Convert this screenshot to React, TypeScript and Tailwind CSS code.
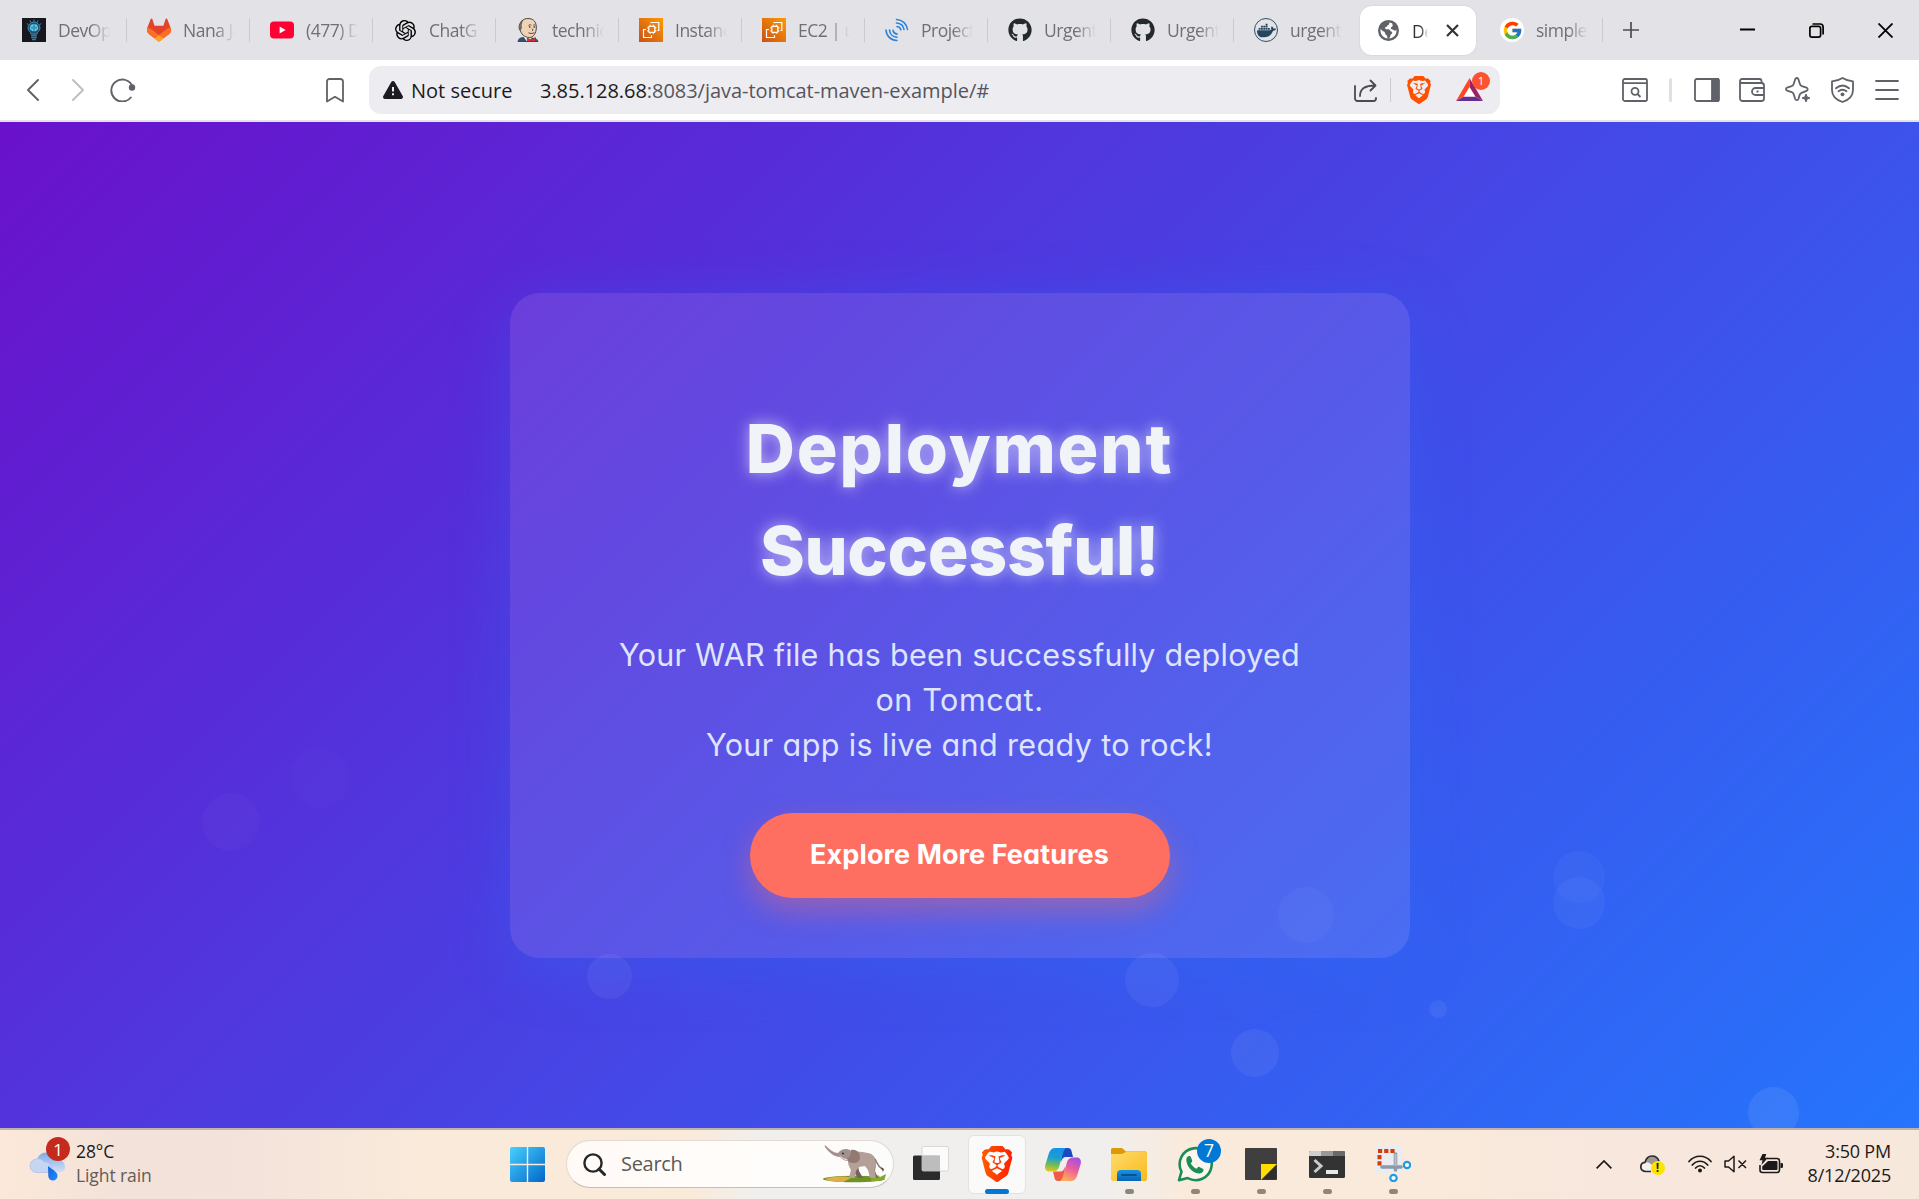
import type { ReactNode } from 'react';
import { FaGithub } from 'react-icons/fa';
import { FcGoogle } from 'react-icons/fc';
import { SiBrave, SiDocker, SiOpenai } from 'react-icons/si';

/* ---------- favicons ---------- */

const DevOpsIcon = () => (
  <svg className="size-6" viewBox="0 0 24 24">
    <rect width="24" height="24" fill="#17181f" />
    <g fill="none" stroke="#3f8fb8" strokeWidth="1">
      <path d="M12 1.5v2M8 2.5l.8 1.6M16 2.500l-.8 1.600M4.800 5.500l1.600 1.200M19.200 5.500l-1.600 1.200" />
      <path d="M9 16c0-2-3-3-3-6a6 6 0 0 1 12 0c0 3-3 4-3 6z" fill="#1d4f6b" />
      <path d="M9.200 17.500h5.600M9.200 19.500h5.600M10 21.500h4" stroke="#2f7ea8" strokeWidth="1.300" />
    </g>
    <path d="M12 6.500c-2.200-.6-4 .8-3.800 2.600-.9 1.400 0 3.200 1.500 3.400.6 1 1.700 1 2.300.5.600.5 1.700.5 2.300-.5 1.500-.2 2.400-2 1.500-3.400.2-1.800-1.600-3.200-3.800-2.600z" fill="#5fd0f5" />
    <path d="M12 6.800v6M10 8.500v2.500M14 8.500v2.500" stroke="#17435c" strokeWidth=".8" />
  </svg>
);

const GitlabIcon = () => (
  <svg className="size-6" viewBox="0 0 25 24">
    <path fill="#E24329" d="M24.507 9.500l-.034-.09L21.082.562a.896.896 0 0 0-1.694.091l-2.290 7.010H7.825L5.535.653a.898.898 0 0 0-1.694-.09L.451 9.411.416 9.500a6.297 6.297 0 0 0 2.090 7.278l.012.010.030.022 5.160 3.867 2.560 1.935 1.554 1.176a1.051 1.051 0 0 0 1.268 0l1.555-1.176 2.560-1.935 5.197-3.890.014-.010A6.297 6.297 0 0 0 24.507 9.500z" />
    <path fill="#FC6D26" d="M24.507 9.500l-.034-.09a11.440 11.440 0 0 0-4.560 2.051l-7.447 5.632 4.742 3.584 5.197-3.890.014-.010A6.297 6.297 0 0 0 24.507 9.500z" />
    <path fill="#FCA326" d="M7.707 20.677l2.560 1.935 1.555 1.176a1.051 1.051 0 0 0 1.268 0l1.555-1.176 2.560-1.935-4.743-3.584-4.755 3.584z" />
    <path fill="#FC6D26" d="M5.010 11.461a11.430 11.430 0 0 0-4.560-2.050L.416 9.500a6.297 6.297 0 0 0 2.090 7.278l.012.010.030.022 5.160 3.867 4.745-3.584-7.444-5.632z" />
  </svg>
);

const YoutubeIcon = () => (
  <svg className="size-6" viewBox="0 0 24 24">
    <rect y="3.500" width="24" height="17" rx="4" fill="#ff0033" />
    <path d="M9.600 8.600v6.800l6-3.400z" fill="#fff" />
  </svg>
);

const JenkinsIcon = () => (
  <svg className="size-6" viewBox="0 0 24 24">
    <path d="M1.500 24c.3-3 2.300-4.500 5.500-5l8 .5c4 .3 7 1.500 7.500 4.500z" fill="#33506b" />
    <path d="M7.500 18.500l3 4.500 5-1-.5-4z" fill="#fff" />
    <path d="M4 11c-1-7 3-10.500 8-10.500 6 0 8.500 4 8.300 9.500-.1 5-2.800 9.500-6.800 9.500C8.500 19.500 4.700 16 4 11z" fill="#efd3b4" stroke="#3a3633" strokeWidth=".9" />
    <path d="M3.500 12c-1.500-3 0-7 2.500-9.500 1 1-1.300 3-.6 6.500.2 1.500-.3 2.500-1.900 3z" fill="#7b706a" stroke="#3a3633" strokeWidth=".5" />
    <path d="M12.500 7.500c1-1 2.200-.8 2.800-.2M17.300 7.200c.8-.6 1.600-.4 2 .2M15.800 10.500c1.200.8 1.400 2 .2 2.400M12.500 14.800c2 1 4 .8 5.800-.1" stroke="#3a3633" strokeWidth=".9" fill="none" />
    <circle cx="13.700" cy="9" r=".8" fill="#222" />
    <circle cx="18.200" cy="9" r=".8" fill="#222" />
    <path d="M11 20l4 1.500 4.500-2v4.500l-4.500-1.200L11.500 24z" fill="#d33833" stroke="#7a1c18" strokeWidth=".5" />
  </svg>
);

const Ec2Icon = () => (
  <svg className="size-6" viewBox="0 0 24 24">
    <defs>
      <linearGradient id="ec2" x1="0" y1="1" x2="1" y2="0">
        <stop offset="0" stopColor="#c8511b" />
        <stop offset="1" stopColor="#ff9900" />
      </linearGradient>
    </defs>
    <rect width="24" height="24" fill="url(#ec2)" />
    <g fill="none" stroke="#fff" strokeWidth="1.200">
      <rect x="9.800" y="8.300" width="6" height="6" rx=".6" />
      <path d="M11.200 8.300V6.800M14.400 8.300V6.800M11.200 15.800v-1.500M14.400 15.800v-1.500M9.800 9.800H8.300M9.800 12.900H8.300M17.300 9.800h-1.500M17.300 12.900h-1.500" />
      <path d="M12.200 5.300V4.500h7.600v8h-1.200M7 11.500H4.500v8h8V17.300" />
    </g>
  </svg>
);

const SonarIcon = () => (
  <svg className="size-6" viewBox="0 0 24 24" fill="none" stroke="#2b82d9" strokeWidth="1.600" strokeLinecap="round">
    <path d="M11.500 1.500c6 .3 10.500 4.500 11 10M11.500 5c4.500.3 7 3 7.500 6.500M12 8.500c2 .2 3.500 1.400 3.800 3.300" />
    <path d="M1 12c.3 5.800 4.800 10.300 11 10.500M4.500 12c.3 4 3.300 7 7.500 7.300M8 12.300c.3 2.100 1.800 3.500 4 3.800" />
  </svg>
);

const DockerIcon = () => (
  <span className="flex size-6 items-center justify-center rounded-full border-[1.5px] border-[#2c5066]">
    <SiDocker className="size-[19px] text-[#24475e]" />
  </span>
);

const GlobeIcon = () => (
  <svg className="size-[21px]" viewBox="0 0 21 21">
    <circle cx="10.500" cy="10.500" r="9.300" fill="#fff" stroke="#5f6368" strokeWidth="2.400" />
    <path d="M2 8.500c1-4 4.500-6.800 8.500-6.800l.8 1.500c0 1.200-.6 2-1.800 2-.2 1.500-1 1.800-2.300 1.800-.3 2 .5 2.300 2.300 2.300 1.700 0 2.700.4 3 2 1.300 0 2 .7 1.700 2-.5 1-1.500 1-1.800 2.300-.2 1.500-.8 2.400-1.800 3.300-1 0-1.300-1-1.400-2.500-.1-1.700-1.700-1.400-2-3-.2-1-.8-1.800-2.200-2.200z" fill="#5f6368" />
    <path d="M14.500 2.800c2.500 1.500 4.300 4.200 4.300 7l-1.800 1c-1 0-1.200-1.200-2.500-1.300-1.500-.2-2-1.200-1.300-2.300.8-1 1.900-.7 1.500-2-.3-1-.5-1.700-.2-2.400z" fill="#5f6368" />
  </svg>
);

const GoogleIcon = () => (
  <span className="flex size-6 items-center justify-center rounded-full bg-white">
    <FcGoogle className="size-[21px]" />
  </span>
);

/* ---------- tab strip ---------- */

const tabs: { icon: ReactNode; title: string; first?: boolean; last?: boolean }[] = [
  { icon: <DevOpsIcon />, title: 'DevOps', first: true },
  { icon: <GitlabIcon />, title: 'Nana Ja' },
  { icon: <YoutubeIcon />, title: '(477) De' },
  { icon: <SiOpenai className="size-[21px] text-black" />, title: 'ChatG' },
  { icon: <JenkinsIcon />, title: 'technic' },
  { icon: <Ec2Icon />, title: 'Instanc' },
  { icon: <Ec2Icon />, title: 'EC2 | us' },
  { icon: <SonarIcon />, title: 'Project' },
  { icon: <FaGithub className="size-6 text-[#24292e]" />, title: 'Urgent' },
  { icon: <FaGithub className="size-6 text-[#24292e]" />, title: 'Urgent' },
  { icon: <DockerIcon />, title: 'urgent-', last: true },
];

const TabTitle = ({ children }: { children: string }) => (
  <span className="ml-3 w-[53px] shrink-0 overflow-hidden text-[17.500px] leading-6 tracking-[-0.500px] whitespace-nowrap text-[#707074] [mask-image:linear-gradient(to_right,#000_60%,transparent_98%)]">
    {children}
  </span>
);

const TabStrip = () => (
  <div className="flex h-[60px] shrink-0 items-center bg-[#e3e2e7] pl-1">
    {tabs.map((t, i) => (
      <div
        key={i}
        className={`flex h-6 w-[123px] shrink-0 items-center ${t.first ? 'pl-[18px]' : 'pl-5'} ${t.last ? '' : 'border-r-[1.5px] border-[#cbcacf]'}`}
      >
        <span className="flex size-6 shrink-0 items-center justify-center">{t.icon}</span>
        <TabTitle>{t.title}</TabTitle>
      </div>
    ))}
    <div className="mt-[1px] ml-[3px] flex h-[49px] w-[116px] shrink-0 items-center rounded-xl bg-white pl-[18px] shadow-[0_0_2px_rgba(0,0,0,0.12)]">
      <GlobeIcon />
      <span className="ml-[13px] w-4 overflow-hidden text-[17.500px] leading-6 tracking-[-0.350px] whitespace-nowrap text-[#303036] [mask-image:linear-gradient(to_right,#000_55%,transparent_100%)]">
        De
      </span>
      <svg className="ml-[18px] size-[13px]" viewBox="0 0 13 13" stroke="#333338" strokeWidth="2.200">
        <path d="M1 1l11 11M12 1L1 12" />
      </svg>
    </div>
    <div className="ml-1 flex h-6 w-[123px] shrink-0 items-center border-r-[1.5px] border-[#cbcacf] pl-5">
      <GoogleIcon />
      <TabTitle>simplew</TabTitle>
    </div>
    <svg className="ml-5 size-4" viewBox="0 0 16 16" stroke="#4c4c52" strokeWidth="1.700">
      <path d="M8 0v16M0 8h16" />
    </svg>
    <svg className="ml-[101px] size-[15px]" viewBox="0 0 15 15" stroke="#000" strokeWidth="2">
      <path d="M0 6.500h15" />
    </svg>
    <svg className="ml-[54px] size-[15px]" viewBox="0 0 15 15" fill="none" stroke="#000" strokeWidth="1.700">
      <rect x=".9" y="3.400" width="10.700" height="10.700" rx="2" />
      <path d="M3.500 1h7.600a3 3 0 0 1 3 3v7.500" />
    </svg>
    <svg className="ml-[54px] size-[15px]" viewBox="0 0 15 15" stroke="#000" strokeWidth="1.800">
      <path d="M.5.500l14 14M14.500.500l-14 14" />
    </svg>
  </div>
);

/* ---------- toolbar ---------- */

const Toolbar = () => (
  <div className="flex h-[62px] shrink-0 items-center border-b-2 border-[#e3e2e8] bg-white">
    <svg className="ml-[27px] h-[22px] w-3" viewBox="0 0 12 22" fill="none" stroke="#5f6268" strokeWidth="1.900" strokeLinecap="round" strokeLinejoin="round">
      <path d="M11 1L1 11l10 10" />
    </svg>
    <svg className="ml-[33px] h-[22px] w-3" viewBox="0 0 12 22" fill="none" stroke="#bfbfc3" strokeWidth="1.900" strokeLinecap="round" strokeLinejoin="round">
      <path d="M1 1l10 10L1 21" />
    </svg>
    <svg className="ml-[26px] h-6 w-[26px]" viewBox="0 0 26 24" fill="none" stroke="#5f6268" strokeWidth="1.900" strokeLinecap="round">
      <path d="M20.800 19.500A11 11 0 1 1 21.500 6.500" />
      <circle cx="22" cy="9.500" r="3.200" fill="#5f6268" stroke="none" />
    </svg>
    <svg className="ml-[190px] h-[25px] w-[18px]" viewBox="0 0 18 25" fill="none" stroke="#5f6268" strokeWidth="1.800" strokeLinejoin="round">
      <path d="M1 3.500A2.500 2.500 0 0 1 3.500 1h11A2.500 2.500 0 0 1 17 3.500V23.500L9 18.800l-8 4.700z" />
    </svg>
    <div className="ml-[25px] flex h-12 w-[1131px] items-center rounded-xl bg-[#edecf1] text-[20px]">
      <svg className="ml-[14px] h-[18px] w-5" viewBox="0 0 20 18">
        <path d="M8.300 1a2 2 0 0 1 3.400 0l8 14a2 2 0 0 1-1.700 3H2a2 2 0 0 1-1.700-3z" fill="#1b1b21" />
        <path d="M10 6v4.500M10 12.300v2" stroke="#edecf1" strokeWidth="2" />
      </svg>
      <span className="mt-px ml-[8px] w-[129px] whitespace-nowrap text-[#1b1b21]">Not secure</span>
      <span className="mt-px tracking-[-0.040px] whitespace-nowrap text-[#55555c]">
        <span className="text-[#1b1b21]">3.85.128.68</span>:8083/java-tomcat-maven-example/#
      </span>
      <svg className="ml-auto h-[23px] w-[23px]" viewBox="0 0 23 23" fill="none" stroke="#4a4b52" strokeWidth="1.800" strokeLinecap="round" strokeLinejoin="round">
        <path d="M1 7v12.500A2.500 2.500 0 0 0 3.500 22h16a2.500 2.500 0 0 0 2.500-2.500V19" />
        <path d="M6 17C6 10 11 6.500 21 6.500M16.500 1.500l5 5-5 5" />
      </svg>
      <div className="ml-[13px] h-6 w-[1.500px] bg-[#cbcad0]" />
      <span className="ml-[14px] flex size-7 items-center justify-center">
        <SiBrave className="size-7 text-[#ff5000]" />
      </span>
      <div className="relative mr-[17px] ml-[23px] h-6 w-[27px]">
        <svg className="h-6 w-[27px]" viewBox="0 0 27 24">
          <path d="M13.500 0L0 23h27z" fill="#fff" />
          <path d="M13.500 0L0 23l7.500-4.300 6-9.700z" fill="#ff4724" />
          <path d="M13.500 0L27 23l-7.500-4.300-6-9.700z" fill="#9e1f63" />
          <path d="M0 23h27l-7.500-4.300h-12z" fill="#662d91" />
        </svg>
        <span className="absolute -top-[6px] left-[16px] flex size-[18px] items-center justify-center rounded-full bg-[#fc522d] text-[11.500px] leading-none text-white">1</span>
      </div>
    </div>
    <svg className="ml-[122px] h-6 w-[26px]" viewBox="0 0 26 24" fill="none" stroke="#5f6268" strokeWidth="1.800">
      <rect x="1" y="1" width="24" height="22" rx="1.800" />
      <path d="M1 5.200h24M15.500 16l3 3" />
      <circle cx="13" cy="13.300" r="3.500" />
    </svg>
    <div className="ml-[21px] h-6 w-[3px] rounded-full bg-[#e0dfe4]" />
    <svg className="ml-[22px] h-6 w-[26px]" viewBox="0 0 26 24" fill="none" stroke="#5f6268" strokeWidth="1.800">
      <rect x="1" y="1" width="24" height="22" rx="1.800" />
      <path d="M18 1h6v22h-6z" fill="#5f6268" />
    </svg>
    <svg className="ml-[19px] h-6 w-[26px]" viewBox="0 0 26 24" fill="none" stroke="#5f6268" strokeWidth="1.800" strokeLinejoin="round">
      <path d="M1 4v16.500A2.500 2.500 0 0 0 3.500 23h19a2.500 2.500 0 0 0 2.500-2.500V7.500A2.500 2.500 0 0 0 22.500 5H3a2 2 0 0 1 0-4h17.500a2 2 0 0 1 2 2v2" />
      <path d="M25 10h-8.500a3.500 3.500 0 0 0 0 7H25M17.500 13.500h2" />
    </svg>
    <svg className="ml-[20px] h-[26px] w-[26px]" viewBox="0 0 26 26" fill="none" stroke="#5f6268" strokeWidth="1.800" strokeLinejoin="round">
      <path d="M10.200 2.200c.6-1.600 2.600-1.600 3.200 0l1.600 5a3 3 0 0 0 1.900 1.900l4.600 1.500c1.600.6 1.600 2.600 0 3.200M10.200 2.200l-1.600 5a3 3 0 0 1-1.900 1.900L2.100 10.600c-1.500.6-1.500 2.400 0 3l4.600 1.500a3 3 0 0 1 1.900 1.900l1.600 5c.6 1.600 2.600 1.600 3.200 0l1.300-4.200a3 3 0 0 1 1.900-1.900l4.900-2.100" />
      <path d="M21 17l1.100 2.900L25 21l-2.900 1.100L21 25l-1.100-2.900L17 21l2.900-1.100z" fill="#5f6268" strokeWidth="1" />
    </svg>
    <svg className="ml-[20px] h-[26px] w-[23px]" viewBox="0 0 23 26" fill="none" stroke="#5f6268" strokeWidth="1.800" strokeLinejoin="round">
      <path d="M11.500 1c3 2 6 3 10.500 3.300V13c0 6-4.500 10-10.500 12C5.500 23 1 19 1 13V4.300C5.500 4 8.500 3 11.500 1z" />
      <path d="M5 11.300c4-3.400 9-3.400 13 0M7.500 14.300c2.500-2 5.500-2 8 0" strokeLinecap="round" />
      <circle cx="11.500" cy="17.300" r="1.900" fill="#5f6268" stroke="none" />
    </svg>
    <svg className="ml-[21px] h-5 w-6" viewBox="0 0 24 20" stroke="#5f6268" strokeWidth="1.800" strokeLinecap="round">
      <path d="M1 1h22M1 10h22M1 19h22" />
    </svg>
  </div>
);

/* ---------- page ---------- */

const Bubbles = () => (
  <>
    <i className="absolute top-[671px] left-[202px] size-[58px] rounded-full bg-white/2" />
    <i className="absolute top-[626px] left-[290px] size-[60px] rounded-full bg-white/1" />
    <i className="absolute top-[832px] left-[587px] size-[45px] rounded-full bg-white/5" />
    <i className="absolute top-[831px] left-[1125px] size-[54px] rounded-full bg-white/5" />
    <i className="absolute top-[765px] left-[1278px] size-[56px] rounded-full bg-white/3" />
    <i className="absolute top-[729px] left-[1553px] size-[52px] rounded-full bg-white/3" />
    <i className="absolute top-[755px] left-[1553px] size-[52px] rounded-full bg-white/4" />
    <i className="absolute top-[878px] left-[1429px] size-[18px] rounded-full bg-white/6" />
    <i className="absolute top-[907px] left-[1231px] size-[48px] rounded-full bg-white/6" />
    <i className="absolute top-[965px] left-[1748px] size-[51px] rounded-full bg-white/8" />
  </>
);

const Page = () => (
  <main className="relative flex h-[1006px] shrink-0 justify-center overflow-hidden bg-[linear-gradient(135deg,#6a11cb_0%,#2575fc_100%)] pt-[171px] font-['Inter',sans-serif] [font-feature-settings:'cv11']">
    <section className="flex h-[665px] w-[900px] flex-col items-center rounded-[30px] bg-white/10 pt-[105px] text-center shadow-[0_12px_60px_rgba(37,117,252,0.3)]">
      <h1 className="text-[68px] leading-[101.500px] font-extrabold whitespace-nowrap text-[#f0f4f8] [text-shadow:0_0_15px_rgba(255,255,255,0.6)]">
        <span className="block tracking-[1.900px]">Deployment</span>
        <span className="block tracking-[-0.300px]">Successful!</span>
      </h1>
      <p className="mt-[31px] text-[30.500px] leading-[45px] whitespace-nowrap text-[#dfe4ff]">
        <span className="block tracking-[0.270px]">Your WAR file has been successfully deployed</span>
        <span className="block tracking-[0.600px]">on Tomcat.</span>
        <span className="block tracking-[0.380px]">Your app is live and ready to rock!</span>
      </p>
      <button className="mt-[46px] flex h-[85px] w-[420px] items-center justify-center rounded-full bg-[#ff6f61] text-[27px] font-bold tracking-[0.100px] text-white shadow-[0_12px_30px_rgba(255,111,97,0.4)]">
        Explore More Features
      </button>
    </section>
    <Bubbles />
  </main>
);

/* ---------- taskbar ---------- */

const WeatherIcon = () => (
  <svg className="h-9 w-9" viewBox="0 0 36 36">
    <defs>
      <linearGradient id="cloud" x1="0" y1="0" x2="0" y2="1">
        <stop offset="0" stopColor="#7fa9e8" />
        <stop offset="1" stopColor="#d3e0f8" />
      </linearGradient>
      <linearGradient id="drop" x1="0" y1="0" x2="1" y2="1">
        <stop offset="0" stopColor="#1a5fd8" />
        <stop offset="1" stopColor="#1a90ff" />
      </linearGradient>
    </defs>
    <path d="M8 14a10 10 0 0 1 19-1c5 0 9 3 9 8 0 4-3 5.500-7 5.500H12z" fill="url(#cloud)" />
    <path d="M7 13c3-1 7 0 8 3 4-1 7 2 7 5.500 0 3-2 5-5 5H7a6.800 6.800 0 0 1 0-13.500z" fill="#c5d5f2" stroke="#9db8e8" strokeWidth=".6" />
    <path d="M19 20c5 4 9.500 6 9.500 10a4.600 4.600 0 0 1-9.200 0z" fill="url(#drop)" />
  </svg>
);

const WindowsIcon = () => (
  <svg className="h-[35px] w-[35px] shrink-0" viewBox="0 0 35 35">
    <defs>
      <linearGradient id="win" gradientUnits="userSpaceOnUse" x1="0" y1="0" x2="35" y2="35">
        <stop offset="0" stopColor="#48d0ff" />
        <stop offset="1" stopColor="#0067c8" />
      </linearGradient>
    </defs>
    <path d="M2 0h14.800v16.800H0V2a2 2 0 0 1 2-2zM18.200 0H33a2 2 0 0 1 2 2v14.800H18.200zM0 18.200h16.800V35H2a2 2 0 0 1-2-2zM18.200 18.200H35V33a2 2 0 0 1-2 2H18.200z" fill="url(#win)" />
  </svg>
);

const ElephantIcon = () => (
  <svg className="h-[38px] w-16" viewBox="0 0 64 38">
    <ellipse cx="31" cy="34" rx="31" ry="3.300" fill="#6f9426" />
    <path d="M2 34c10-3 20-3 26-1l-8 4c-8 0-15-1-18-3z" fill="#dfae45" />
    <path d="M48 34l7-4 2 2 6-3-1 4-4 3H48z" fill="#86a82c" />
    <path d="M44 18l9 1-1 7 3 7h-6l-3-7z" fill="#77625d" />
    <path d="M30 20l5 0 1 6 4 7h-5l-5-7z" fill="#77625d" />
    <path d="M25 8c8-3 14-1 20 0 6 1 9 6 8 12-1 3-2 5-1 7l1 6h-6l-2-8-3-4-6 1-3 4-1 7h-6l2-8c-2-4-3-5-3-9z" fill="#b5a099" />
    <path d="M15 8c3-4 8-5 12-3 3 2 3 8 0 10-4 2-7 0-10-3C12 12 6 8 2 2c-1-1 0-2 1-1 4 4 8 7 12 7z" fill="#a3918f" />
    <path d="M28 5c5-1 9 2 9 7 0 4-3 6-6 6-4 0-7-2-7-5 3 0 4-3 4-8z" fill="#927a73" />
    <path d="M16 9c3 4 5 5 9 5-2 2-6 1-9-5z" fill="#efe5da" />
    <circle cx="20" cy="8.500" r=".9" fill="#222" />
    <path d="M52 14c3 5 3 8 7 10" stroke="#8c7770" strokeWidth="1.400" fill="none" />
    <path d="M58 22l2 5 1-3z" fill="#5b3d33" />
  </svg>
);

const TaskViewIcon = () => (
  <svg className="h-9 w-9" viewBox="0 0 36 36">
    <rect x="0" y="9.500" width="27" height="24.500" rx="1.500" fill="#2b2b2b" />
    <rect x="9" y="0.500" width="26.500" height="24.500" rx="1.500" fill="#fff" fillOpacity=".75" stroke="#d0d0d0" strokeWidth=".8" />
    <path d="M9 9.500h18V25H9z" fill="#bdbdbd" />
  </svg>
);

const BraveTaskIcon = () => (
  <span className="flex h-[59px] w-[58px] items-center justify-center rounded-md border border-[#e4e2e1] bg-[#fafafa]">
    <svg className="absolute size-0">
      <linearGradient id="brv" x1="0" y1="0" x2="1" y2="0">
        <stop offset="0" stopColor="#ff5a00" />
        <stop offset="1" stopColor="#ff1f00" />
      </linearGradient>
    </svg>
    <SiBrave className="size-9 fill-[url(#brv)]" />
  </span>
);

const CopilotIcon = () => (
  <svg className="h-[33px] w-9" viewBox="0 0 36 33">
    <defs>
      <linearGradient id="cpa" x1=".3" y1="0" x2=".2" y2="1">
        <stop offset="0" stopColor="#1592e8" />
        <stop offset=".4" stopColor="#1a9fd0" />
        <stop offset=".75" stopColor="#7fbf4a" />
        <stop offset="1" stopColor="#f0c51a" />
      </linearGradient>
      <linearGradient id="cpb" x1=".8" y1="0" x2=".4" y2="1">
        <stop offset="0" stopColor="#a34fe0" />
        <stop offset=".5" stopColor="#ea5f9b" />
        <stop offset="1" stopColor="#ffab5c" />
      </linearGradient>
    </defs>
    <path d="M17 0h6c2 0 3 1 3.500 3l1.500 6h-7c-3 0-4 2-5 5z" fill="#1b49c4" />
    <path d="M19 33h-6c-2 0-3-1-3.500-3L8 23.500h7c3 0 4-2 5-5z" fill="#ee5a45" />
    <path d="M10 0h12c-2 0-3 2-4 5l-4 14c-1 3-3 4.500-6 4.500H4C1 23.500-.5 21 .3 17L4 5C5 2 7 0 10 0z" fill="url(#cpa)" />
    <path d="M26 33H14c2 0 3-2 4-5l4-14c1-3 3-4.500 6-4.500h4c3 0 4.500 2.500 3.700 6.500L32 28c-1 3-3 5-6 5z" fill="url(#cpb)" />
  </svg>
);

const FolderIcon = () => (
  <svg className="h-[33px] w-9" viewBox="0 0 36 33">
    <defs>
      <linearGradient id="fld" x1="0" y1="0" x2="1" y2="1">
        <stop offset="0" stopColor="#ffdc6b" />
        <stop offset="1" stopColor="#f8b91c" />
      </linearGradient>
      <linearGradient id="fldb" x1="0" y1="0" x2="0" y2="1">
        <stop offset="0" stopColor="#1693e0" />
        <stop offset="1" stopColor="#0a64b8" />
      </linearGradient>
    </defs>
    <path d="M0 1.500A1.500 1.500 0 0 1 1.500 0H11l4 3.500h19.500A1.500 1.500 0 0 1 36 5v8H0z" fill="#dc9a05" />
    <path d="M0 6h11l4-2h20a1 1 0 0 1 1 1v26a2 2 0 0 1-2 2H2a2 2 0 0 1-2-2z" fill="url(#fld)" />
    <path d="M6 33v-7a4 4 0 0 1 4-4h16a4 4 0 0 1 4 4v7z" fill="url(#fldb)" />
    <path d="M11 27h14" stroke="#0b4f90" strokeWidth="1.800" strokeLinecap="round" />
  </svg>
);

const WhatsappIcon = () => (
  <span className="relative block size-9">
    <svg className="size-9" viewBox="0 0 36 36">
      <path d="M2 34.200l2.500-8.600A16 16 0 1 1 10.600 32z" fill="#fdf6ee" stroke="#1c8d56" strokeWidth="2.600" strokeLinejoin="round" />
      <path d="M9.300 13c.4-1.700 1.500-3 3-3 1 0 1.300.5 1.700 1.400l1.200 3c.3.800-.2 1.400-1.500 2.800 1.200 2.600 3.500 4.500 6 5.600 1.400-1.800 1.900-2.200 2.700-1.800l3.300 1.700c.8.400 1 .8.800 1.600-.5 2.300-2.700 3.500-4.800 3.300C15 26.800 9 20 9.300 13z" fill="#1c8d56" />
    </svg>
    <span className="absolute -top-[7px] left-5 flex size-6 items-center justify-center rounded-full bg-[#0078d4] text-[17.500px] leading-none text-white">7</span>
  </span>
);

const StickyIcon = () => (
  <svg className="size-8" viewBox="0 0 32 32">
    <rect width="32" height="32" rx=".8" fill="#3f3f3f" />
    <path d="M16 16h16L16 32z" fill="#ffde00" />
    <path d="M31.500 17v14.500H17z" fill="#2e2e2e" />
  </svg>
);

const TerminalIcon = () => (
  <svg className="h-[27px] w-9" viewBox="0 0 36 27">
    <rect width="36" height="27" rx="1.500" fill="#333" />
    <path d="M1.500 0H12v5H0V1.500A1.500 1.500 0 0 1 1.500 0z" fill="#cfcfcf" />
    <path d="M12 0h12v5H12z" fill="#999" />
    <path d="M24 0h10.500A1.500 1.500 0 0 1 36 1.500V5H24z" fill="#6a6a6a" />
    <path d="M5.500 9l6.500 6-6.500 6" stroke="#ccc" strokeWidth="3" fill="none" />
    <path d="M17 19h12v4H17z" fill="#e8e8e8" />
  </svg>
);

const SnipIcon = () => (
  <svg className="size-9" viewBox="0 0 36 36">
    <rect width="27" height="27" rx="2" fill="#e9edf2" />
    <path d="M4.500 9v11.500M3 5h17" stroke="#d83b01" strokeWidth="4" strokeDasharray="4.200 2" fill="none" />
    <path d="M20.500 8v16M7 21h19" stroke="#8d99a6" strokeWidth="3.600" strokeLinecap="round" />
    <path d="M20.500 8v12" stroke="#b9c2cc" strokeWidth="2" />
    <circle cx="32" cy="19" r="3.200" fill="#fff" stroke="#1d9be6" strokeWidth="2.200" />
    <circle cx="18.500" cy="32" r="3.200" fill="#fff" stroke="#1d9be6" strokeWidth="2.200" />
  </svg>
);

const apps: { icon: ReactNode; mark?: 'active' | 'open' }[] = [
  { icon: <TaskViewIcon /> },
  { icon: <BraveTaskIcon />, mark: 'active' },
  { icon: <CopilotIcon /> },
  { icon: <FolderIcon />, mark: 'open' },
  { icon: <WhatsappIcon />, mark: 'open' },
  { icon: <StickyIcon />, mark: 'open' },
  { icon: <TerminalIcon />, mark: 'open' },
  { icon: <SnipIcon />, mark: 'open' },
];

const Taskbar = () => (
  <footer className="flex h-[71px] shrink-0 items-center border-t-2 border-[#bdb3ac] bg-[linear-gradient(to_right,#fbe8d9_0px,#f3e2da_130px,#f4e3da_250px,#faeada_420px,#faeada_690px,#f0efee_760px,#f0efee_1100px,#faeadb_1190px,#faeadb_1420px,#f7e7dd_1600px,#f7e8dc_1919px)] pb-px">
    <div className="flex w-[510px] shrink-0 items-center pl-[29px]">
      <div className="relative h-9 w-9">
        <WeatherIcon />
        <span className="absolute -top-[9px] left-[17px] flex size-6 items-center justify-center rounded-full bg-[#c42b1c] text-[17px] leading-none text-white">1</span>
      </div>
      <div className="mb-[2px] ml-[11px] text-[17.500px] leading-6 tracking-[-0.100px]">
        <div className="text-[#1c1a19]">28°C</div>
        <div className="text-[#625b56]">Light rain</div>
      </div>
    </div>
    <WindowsIcon />
    <div className="ml-[21px] flex h-12 w-[328px] shrink-0 items-center rounded-full border border-[#e2d9d2] border-b-[#c4bdb8] bg-[linear-gradient(to_right,#fffaf6,#fffdfb_60%,#fcfcfc)]">
      <svg className="ml-4 size-[23px]" viewBox="0 0 23 23" fill="none" stroke="#25282b" strokeWidth="2.400" strokeLinecap="round">
        <circle cx="10" cy="10" r="8.600" />
        <path d="M16 16l5.500 5.500" strokeWidth="3" />
      </svg>
      <span className="ml-[15px] text-[20px] tracking-[-0.300px] text-[#5c5957]">Search</span>
      <span className="mr-[6px] ml-auto">
        <ElephantIcon />
      </span>
    </div>
    <div className="ml-1 flex">
      {apps.map((a, i) => (
        <div key={i} className="relative flex h-[59px] w-[66px] items-center justify-center">
          {a.icon}
          {a.mark === 'active' && <span className="absolute bottom-0 h-[5px] w-6 rounded-full bg-[#0078d4]" />}
          {a.mark === 'open' && <span className="absolute bottom-0 h-[5px] w-[9px] rounded-full bg-[#8f857d]" />}
        </div>
      ))}
    </div>
    <div className="ml-auto flex items-center">
      <svg className="h-[9px] w-4" viewBox="0 0 16 9" fill="none" stroke="#1c1a19" strokeWidth="1.700">
        <path d="M.6 8.400L8 1l7.400 7.400" />
      </svg>
      <div className="relative ml-7 h-[18px] w-6">
        <svg className="h-[18px] w-6" viewBox="0 0 24 18">
          <path d="M6 16.500C2.500 16.500.8 14.500.8 12S2.500 7.500 5 7.300C9 5.500 12 9 14 12.500l-2 4z" fill="#f4efec" />
          <path d="M5 7.300C6 3.500 8 1 12 1c4 0 6 2 7 5.200l-5 6.300c-2-3.500-5-5.500-9-5.200z" fill="#9b9896" />
          <path d="M11 16.500H6C2.500 16.500.8 14.500.8 12S2.500 7.500 5 7.300C6 3.500 8 1 12 1c4 0 6 2 7 5.200" fill="none" stroke="#2b2b2b" strokeWidth="1.700" />
        </svg>
        <span className="absolute top-[6px] left-[11px] flex size-[14px] items-center justify-center rounded-full bg-[#fde300] text-[12px] leading-none font-bold text-[#222]">!</span>
      </div>
      <svg className="ml-6 h-[18px] w-6" viewBox="0 0 24 18" fill="none" stroke="#1c1a19" strokeWidth="1.700" strokeLinecap="round">
        <path d="M1 6.500c6-7 16-7 22 0M4.300 10c4.400-5 11-5 15.400 0M7.600 13c2.600-3 6.200-3 8.800 0" />
        <circle cx="12" cy="15.500" r="2" fill="#1c1a19" stroke="none" />
      </svg>
      <svg className="ml-3 h-[18px] w-[23px]" viewBox="0 0 23 18" fill="none" stroke="#1c1a19" strokeWidth="1.500" strokeLinejoin="round">
        <path d="M1 6h3.500L10 1.200v15.600L4.500 12H1zM14.500 5.500l7.500 7.500M22 5.500l-7.500 7.500" />
      </svg>
      <svg className="ml-3 h-5 w-6" viewBox="0 0 24 20">
        <path d="M8 4.500h10a2.500 2.500 0 0 1 2.500 2.500v9a2.500 2.500 0 0 1-2.500 2.500H3.500A2.500 2.500 0 0 1 1 16v-5" fill="none" stroke="#1c1a19" strokeWidth="1.600" />
        <path d="M9 7h8.500a1 1 0 0 1 1 1v7a1 1 0 0 1-1 1H4.200a1 1 0 0 1-1-1v-2.500z" fill="#1c1a19" />
        <path d="M21.500 9h1.200a1.300 1.300 0 0 1 1.300 1.300v2.400a1.300 1.300 0 0 1-1.300 1.300h-1.200z" fill="#1c1a19" />
        <path d="M3.500 0h3.800L6 3.800h3L2.500 11l1-4.800H.5z" fill="#1c1a19" />
      </svg>
      <div className="mr-[28px] mb-[2px] ml-[25px] text-right text-[18px] leading-6 tracking-[-0.200px] whitespace-nowrap text-[#1c1a19]">
        <div>3:50 PM</div>
        <div>8/12/2025</div>
      </div>
    </div>
  </footer>
);

export default function App() {
  return (
    <div className="flex h-[1199px] w-[1919px] flex-col overflow-hidden bg-white font-['Open_Sans',sans-serif]">
      <TabStrip />
      <Toolbar />
      <Page />
      <Taskbar />
    </div>
  );
}
